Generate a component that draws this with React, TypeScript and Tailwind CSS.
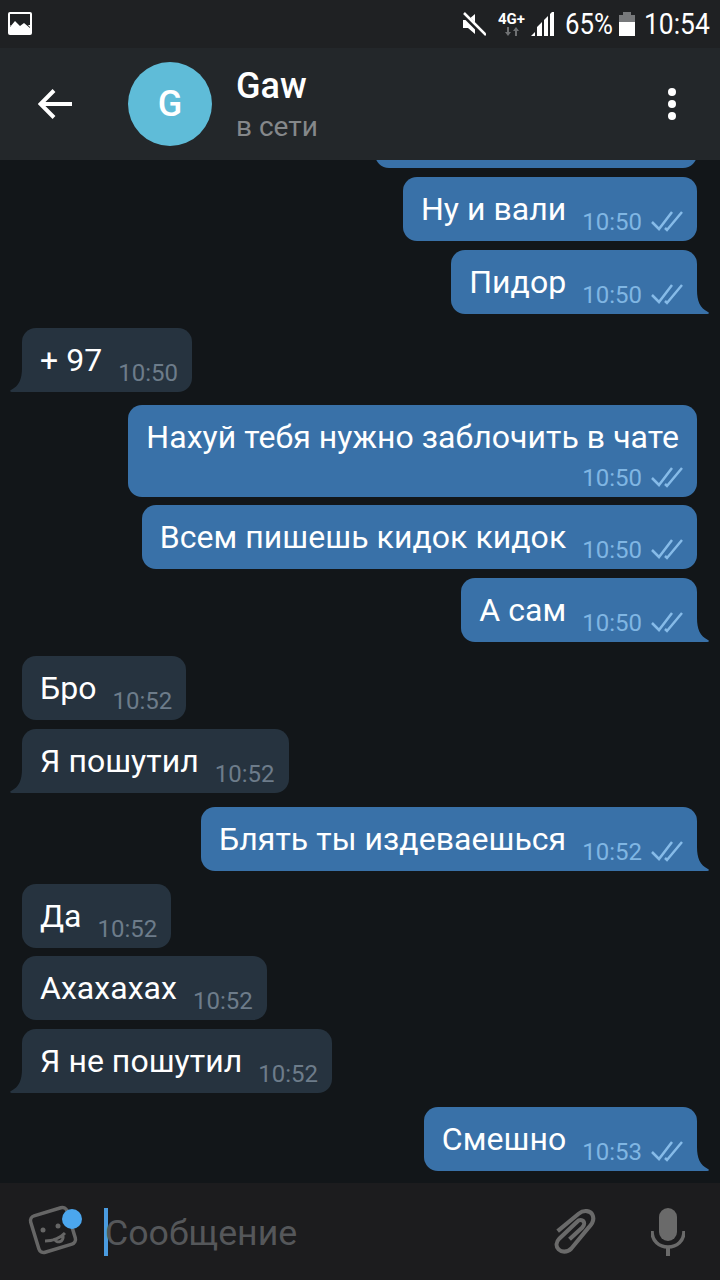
const msgs = [
  { id: 2, out: true, text: "Ну и вали", time: "10:50", wrap: "mt-[9px]" },
  { id: 3, out: true, text: "Пидор", time: "10:50", wrap: "mt-[9px]", tail: true },
  { id: 4, out: false, text: "+ 97", time: "10:50", wrap: "mt-[14px]", tail: true },
  { id: 5, out: true, text: "Нахуй тебя нужно заблочить в чате", time: "10:50", wrap: "mt-[13px]", twoLine: true },
  { id: 6, out: true, text: "Всем пишешь кидок кидок", time: "10:50", wrap: "mt-[8px]" },
  { id: 7, out: true, text: "А сам", time: "10:50", wrap: "mt-[9px]", tail: true },
  { id: 8, out: false, text: "Бро", time: "10:52", wrap: "mt-[14px]" },
  { id: 9, out: false, text: "Я пошутил", time: "10:52", wrap: "mt-[9px]", tail: true },
  { id: 10, out: true, text: "Блять ты издеваешься", time: "10:52", wrap: "mt-[14px]", tail: true },
  { id: 11, out: false, text: "Да", time: "10:52", wrap: "mt-[13px]" },
  { id: 12, out: false, text: "Ахахахах", time: "10:52", wrap: "mt-[8px]" },
  { id: 13, out: false, text: "Я не пошутил", time: "10:52", wrap: "mt-[9px]", tail: true },
  { id: 14, out: true, text: "Смешно", time: "10:53", wrap: "mt-[14px]", tail: true },
];

function Checks() {
  return (
    <svg width="32" height="22" viewBox="0 0 32 22" fill="none" stroke="#86bbe8" strokeWidth="2.500" className="ml-[9px] -mt-[3px] shrink-0">
      <path d="M1 12l7 7L21 2" />
      <path d="M14 18l2 2L31 2" />
    </svg>
  );
}

function Tail({ out }: { out: boolean }) {
  if (out) {
    return (
      <svg width="14" height="24" viewBox="0 0 14 24" className="absolute -right-[12px] bottom-0 fill-[#3971a8]">
        <path d="M0 0h2c0 11 3 18 11 22 1.500 .8 1 2-.5 2H0z" />
      </svg>
    );
  }
  return (
    <svg width="14" height="24" viewBox="0 0 14 24" className="absolute -left-[12px] bottom-0 fill-[#26333f]">
      <path d="M14 0h-2c0 11-3 18-11 22-1.500 .8-1 2 .5 2H14z" />
    </svg>
  );
}

function Bubble({ m }: { m: (typeof msgs)[number] }) {
  const color = m.out ? "bg-[#3971a8]" : "bg-[#26333f]";
  const corner = m.tail ? (m.out ? "rounded-br-none" : "rounded-bl-none") : "";
  return (
    <div className={`flex ${m.out ? "justify-end pr-[23px]" : "justify-start pl-[22px]"} ${m.wrap}`}>
      <div className={`relative rounded-[14px] ${color} ${corner} pl-[18px] pr-[14px] ${m.twoLine ? "flex flex-col h-[92px]" : "flex items-start h-[64px]"}`}>
        <span className={`text-white text-[32px] leading-[40px] tracking-[0.04px] whitespace-nowrap mt-[12px] ${m.twoLine ? "pr-[4px]" : ""}`}>{m.text}</span>
        <div className={`flex items-center ${m.twoLine ? "justify-end mt-[6px]" : "ml-[16px] mt-[30px]"}`}>
          <span className={`text-[24px] leading-[30px] ${m.out ? "text-[#80b6e3]" : "text-[#6d7c8a]"}`}>{m.time}</span>
          {m.out && <Checks />}
        </div>
        {m.tail && <Tail out={m.out} />}
      </div>
    </div>
  );
}

function StatusBar() {
  return (
    <div className="h-[48px] shrink-0 bg-[#1f2123] flex items-center pl-[8px] pr-[10px] text-white">
      <svg width="24" height="24" viewBox="0 0 24 24">
        <rect width="24" height="23" rx="2" fill="#fff" />
        <rect x="2" y="2" width="20" height="11" fill="#1f2123" />
        <path d="M2 14l5-6 5 5 4-4 6 6v2H2z" fill="#1f2123" />
        <path d="M2 15l5-6 5 5 4-3 6 5v6H2z" fill="#fff" />
      </svg>
      <div className="ml-auto flex items-center">
        <svg width="24" height="24" viewBox="0 0 24 24" fill="#fff">
          <path d="M1 8h5l7-6v20l-7-6H1z" />
          <path d="M1 2l22 22" stroke="#1f2123" strokeWidth="5" />
          <path d="M2 1l22 22" stroke="#fff" strokeWidth="2.500" />
        </svg>
        <div className="ml-[12px] w-[27px] flex flex-col items-center">
          <span className="text-[15px] leading-[15px] font-bold whitespace-nowrap">4G+</span>
          <svg width="16" height="9" viewBox="0 0 16 9" fill="#6f7173">
            <path d="M3 0h2v5h2L4 9 1 5h2zM11 9h2V4h2l-3-4-3 4h2z" />
          </svg>
        </div>
        <svg width="24" height="24" viewBox="0 0 24 24" fill="#fff" className="ml-[6px]">
          <path d="M0 24l4-4v4zM6 24v-9l5-5v14zM13 24V8l4-4v20zM19 24V2l4-4v26z" />
        </svg>
        <span className="ml-[10px] text-[30px] leading-[48px] scale-x-[0.86] origin-left w-[46px]">65%</span>
        <svg width="16" height="24" viewBox="0 0 16 24" className="ml-[8px]">
          <path d="M0 3h4V0h8v3h4v8H0z" fill="#77797b" />
          <rect y="10" width="16" height="14" fill="#fff" />
        </svg>
        <span className="ml-[9px] text-[30px] leading-[48px] scale-x-[0.88] origin-left w-[66px] whitespace-nowrap">10:54</span>
      </div>
    </div>
  );
}

function Header() {
  return (
    <div className="h-[112px] shrink-0 bg-[#23272a] flex items-center relative z-10">
      <svg width="34" height="30" viewBox="0 0 34 30" fill="none" stroke="#fff" strokeWidth="4" className="ml-[38px]">
        <path d="M34 15H3M16 1.500L2.500 15 16 28.500" />
      </svg>
      <div className="ml-[56px] w-[84px] h-[84px] rounded-full bg-[#5fbcd8] flex items-center justify-center text-white text-[36px] font-medium">G</div>
      <div className="ml-[24px] mt-[3px] flex flex-col">
        <span className="text-white text-[36px] leading-[42px] font-medium">Gaw</span>
        <span className="text-[#85888a] text-[28px] leading-[40px]">в сети</span>
      </div>
      <div className="ml-auto mr-[44px] flex flex-col gap-[4px]">
        <div className="w-[8px] h-[8px] rounded-full bg-white" />
        <div className="w-[8px] h-[8px] rounded-full bg-white" />
        <div className="w-[8px] h-[8px] rounded-full bg-white" />
      </div>
    </div>
  );
}

function InputBar() {
  return (
    <div className="h-[97px] shrink-0 bg-[#1c1c1e] flex items-center">
      <div className="relative ml-[28px] w-[54px] h-[54px]">
        <svg width="54" height="54" viewBox="0 0 54 54" fill="none" stroke="#666" strokeWidth="3.500">
          <rect x="6" y="6" width="38" height="38" rx="5" transform="rotate(-17 25 25)" />
          <circle cx="15" cy="25" r="2.500" fill="#666" stroke="none" />
          <circle cx="30" cy="21" r="2.500" fill="#666" stroke="none" />
          <path d="M17 36c8 0 15-3 20-8M26 33c2 6 10 5 9-3" strokeWidth="3" />
        </svg>
        <div className="absolute right-0 top-[4px] w-[20px] h-[20px] rounded-full bg-[#4ba6ee]" />
      </div>
      <div className="relative ml-[22px] flex items-center h-[48px]">
        <div className="w-[4px] h-[48px] bg-[#4a9be0]" />
        <span className="-ml-[3px] mt-[3px] text-[#55575a] text-[35.700px] leading-[48px]">Сообщение</span>
      </div>
      <svg width="42" height="48" viewBox="0 0 46 50" fill="none" stroke="#6a6a6a" strokeWidth="4.500" className="ml-auto">
        <path d="M4 24L27 5c6-5 13-3 15 1s1 9-4 14L19 43c-5 5-11 4-14 1s-3-8 1-12l19-18c3-3 6-2 7-1s2 4-1 7L17 33" />
      </svg>
      <svg width="34" height="48" viewBox="0 0 34 48" className="ml-[55px] mr-[35px]">
        <rect x="8" y="0" width="18" height="33" rx="9" fill="#6a6a6a" />
        <path d="M1 23c0 10 7 16 16 16s16-6 16-16" fill="none" stroke="#6a6a6a" strokeWidth="3.500" />
        <rect x="15" y="38" width="4" height="10" fill="#6a6a6a" />
      </svg>
    </div>
  );
}

export default function App() {
  return (
    <div className="w-[720px] h-[1280px] flex flex-col bg-[#121619] overflow-hidden font-['Roboto',sans-serif]">
      <StatusBar />
      <Header />
      <div className="flex-1 min-h-0 overflow-hidden">
        {/* tail end of a bubble scrolled under the header */}
        <div className="flex justify-end pr-[23px] -mt-[56px]">
          <div className="w-[322px] h-[64px] rounded-[14px] bg-[#3971a8]" />
        </div>
        {msgs.map((m) => (
          <Bubble key={m.id} m={m} />
        ))}
      </div>
      <InputBar />
    </div>
  );
}
